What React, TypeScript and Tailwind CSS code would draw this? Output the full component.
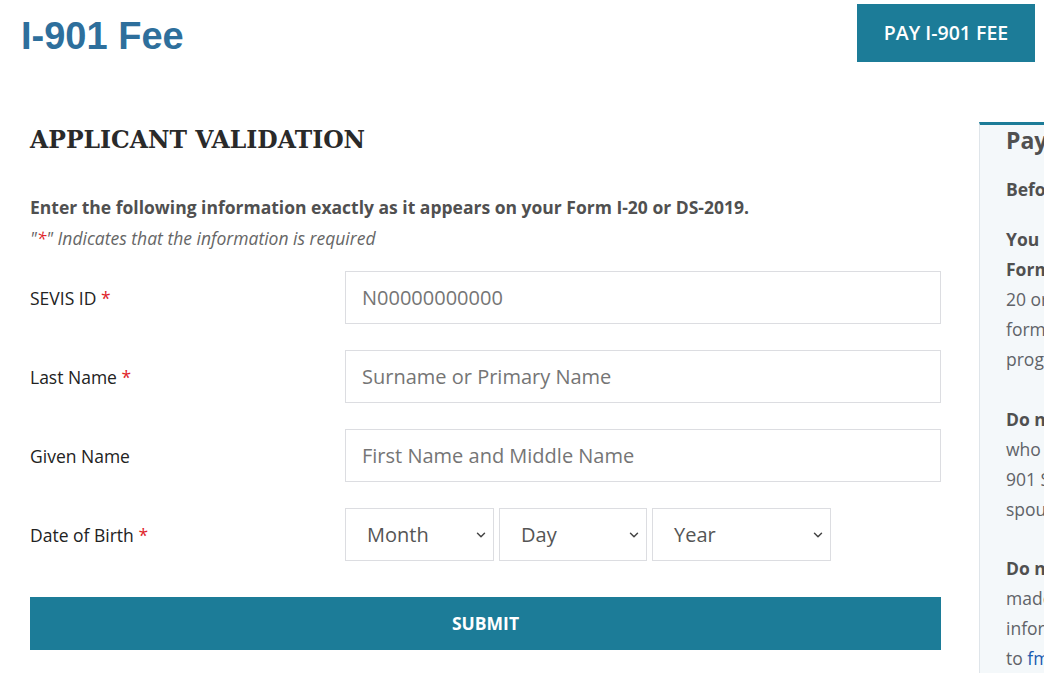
import { ChevronDown } from "lucide-react";

const fields = [
  { label: "SEVIS ID", required: true, placeholder: "N00000000000" },
  { label: "Last Name", required: true, placeholder: "Surname or Primary Name" },
  { label: "Given Name", required: false, placeholder: "First Name and Middle Name" },
];

const selects = [
  { label: "Month", width: "w-[149px]" },
  { label: "Day", width: "w-[148px]" },
  { label: "Year", width: "w-[179px]" },
];

function Sidebar() {
  return (
    <aside className="mt-[60px] w-[320px] shrink-0 border-t-[3px] border-l border-t-[#1c7c98] border-l-[#dfe5ea] bg-[#f4f8fa] pl-[26px] text-[17.5px] leading-[30px] text-[#5f6368] whitespace-nowrap">
      <h3 className="-mt-[2px] text-[23px] font-bold leading-[34px] text-[#505050]">Pay I-901 Fee</h3>
      <p className="mt-[17px] font-bold text-[#505050]">Before you begin</p>
      <div className="mt-[20px]">
        <p className="font-bold text-[#505050]">You must have your</p>
        <p className="font-bold text-[#505050]">Form I-</p>
        <p>20 or DS-2019 before paying the</p>
        <p>form from your school or</p>
        <p>program sponsor.</p>
      </div>
      <div className="mt-[30px]">
        <p className="font-bold text-[#505050]">Do not pay for dependents</p>
        <p>who have an F-2 or J-2 visa. The I-</p>
        <p>901 SEVIS fee is not required for</p>
        <p>spouses or children.</p>
      </div>
      <div className="mt-[29px]">
        <p className="font-bold text-[#505050]">Do not pay twice</p>
        <p>made a payment? Check your</p>
        <p>information or send an email</p>
        <p>
          to <span className="text-[#1a5cb0]">fmjfee.com</span>
        </p>
      </div>
    </aside>
  );
}

export default function App() {
  return (
    <div className="h-[681px] w-[1044px] overflow-hidden bg-white font-['Open_Sans',sans-serif]">
      <header className="flex items-start justify-between pl-[21px] pr-[9px] pt-[4px]">
        <h1 className="mt-[13px] font-['Liberation_Sans',Arial,sans-serif] text-[38px] font-bold leading-[38px] text-[#2e6f9c]">
          I-901 Fee
        </h1>
        <button className="h-[58px] w-[178px] bg-[#1c7c98] text-[19.5px] font-semibold text-white">
          PAY I-901 FEE
        </button>
      </header>

      <div className="flex">
        <main className="ml-[30px] w-[911px] shrink-0">
          <h2 className="mt-[63px] font-['DejaVu_Serif',serif] text-[23.5px] font-bold leading-[30px] text-[#2a2a2a]">
            APPLICANT VALIDATION
          </h2>
          <p className="mt-[40px] text-[17.5px] font-bold leading-[24px] text-[#505050]">
            Enter the following information exactly as it appears on your Form I-20 or DS-2019.
          </p>
          <p className="mt-[7px] text-[17.5px] italic leading-[24px] text-[#666]">
            "<span className="text-[#e0242b]">*</span>" Indicates that the information is required
          </p>

          <div className="mt-[21px] flex flex-col gap-[26px]">
            {fields.map((f) => (
              <div key={f.label} className="flex items-center">
                <label className="w-[315px] shrink-0 text-[17.5px] leading-[24px] text-[#222]">
                  {f.label}
                  {f.required && <span className="text-[#e0242b]"> *</span>}
                </label>
                <input
                  placeholder={f.placeholder}
                  className="h-[53px] flex-1 border border-[#dcdde1] px-[16px] text-[20px] placeholder:text-[#757575] outline-none"
                />
              </div>
            ))}
            <div className="flex items-center">
              <label className="w-[315px] shrink-0 text-[17.5px] leading-[24px] text-[#222]">
                Date of Birth<span className="text-[#e0242b]"> *</span>
              </label>
              <div className="flex gap-[5px]">
                {selects.map((s) => (
                  <div
                    key={s.label}
                    className={`${s.width} flex h-[53px] items-center justify-between border border-[#dcdde1] pl-[21px] pr-[5px]`}
                  >
                    <span className="text-[20px] text-[#555]">{s.label}</span>
                    <ChevronDown size={14} strokeWidth={2.5} className="text-[#444]" />
                  </div>
                ))}
              </div>
            </div>
          </div>

          <button className="mt-[36px] h-[53px] w-full bg-[#1c7c98] text-[17.5px] font-bold text-white">
            SUBMIT
          </button>
        </main>
        <div className="ml-[38px]">
          <Sidebar />
        </div>
      </div>
    </div>
  );
}
